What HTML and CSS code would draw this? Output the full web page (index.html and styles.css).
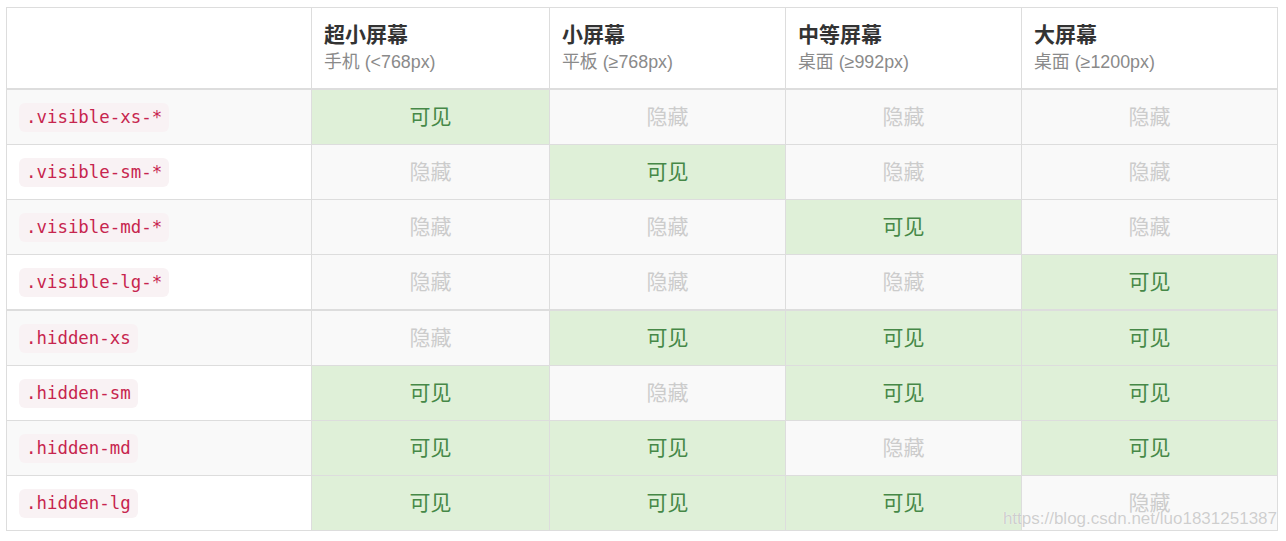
FILE: index.html
```html
<!DOCTYPE html>
<html lang="zh-CN">
<head>
<meta charset="utf-8">
<title>响应式工具</title>
<link rel="stylesheet" href="styles.css">
</head>
<body>
<div class="wrap">
<table class="docs-table">
  <colgroup>
    <col class="c1"><col class="c2"><col class="c3"><col class="c4"><col class="c5">
  </colgroup>
  <thead>
    <tr>
      <th></th>
      <th>超小屏幕<small>手机 (&lt;768px)</small></th>
      <th>小屏幕<small>平板 (≥768px)</small></th>
      <th>中等屏幕<small>桌面 (≥992px)</small></th>
      <th>大屏幕<small>桌面 (≥1200px)</small></th>
    </tr>
  </thead>
  <tbody>
    <tr>
      <th><code>.visible-xs-*</code></th>
      <td class="is-visible">可见</td>
      <td class="is-hidden">隐藏</td>
      <td class="is-hidden">隐藏</td>
      <td class="is-hidden">隐藏</td>
    </tr>
    <tr>
      <th><code>.visible-sm-*</code></th>
      <td class="is-hidden">隐藏</td>
      <td class="is-visible">可见</td>
      <td class="is-hidden">隐藏</td>
      <td class="is-hidden">隐藏</td>
    </tr>
    <tr>
      <th><code>.visible-md-*</code></th>
      <td class="is-hidden">隐藏</td>
      <td class="is-hidden">隐藏</td>
      <td class="is-visible">可见</td>
      <td class="is-hidden">隐藏</td>
    </tr>
    <tr>
      <th><code>.visible-lg-*</code></th>
      <td class="is-hidden">隐藏</td>
      <td class="is-hidden">隐藏</td>
      <td class="is-hidden">隐藏</td>
      <td class="is-visible">可见</td>
    </tr>
  </tbody>
  <tbody>
    <tr>
      <th><code>.hidden-xs</code></th>
      <td class="is-hidden">隐藏</td>
      <td class="is-visible">可见</td>
      <td class="is-visible">可见</td>
      <td class="is-visible">可见</td>
    </tr>
    <tr>
      <th><code>.hidden-sm</code></th>
      <td class="is-visible">可见</td>
      <td class="is-hidden">隐藏</td>
      <td class="is-visible">可见</td>
      <td class="is-visible">可见</td>
    </tr>
    <tr>
      <th><code>.hidden-md</code></th>
      <td class="is-visible">可见</td>
      <td class="is-visible">可见</td>
      <td class="is-hidden">隐藏</td>
      <td class="is-visible">可见</td>
    </tr>
    <tr>
      <th><code>.hidden-lg</code></th>
      <td class="is-visible">可见</td>
      <td class="is-visible">可见</td>
      <td class="is-visible">可见</td>
      <td class="is-hidden">隐藏</td>
    </tr>
  </tbody>
</table>
<span class="watermark">https://blog.csdn.net/luo1831251387</span>
</div>
</body>
</html>
```

FILE: styles.css
```css
html, body {
  margin: 0;
  padding: 0;
  background: #fff;
}
body {
  font-family: "Liberation Sans", "Noto Sans CJK SC", sans-serif;
  font-size: 21px;
  line-height: 30px;
  color: #333;
}
.wrap {
  position: relative;
  padding: 7px 0 0 6px;
  width: 1271px;
}
.docs-table {
  border-collapse: collapse;
  border-spacing: 0;
  table-layout: fixed;
  width: 1271px;
  border: 1px solid #ddd;
}
.c1 { width: 305px; }
.c2 { width: 238px; }
.c3 { width: 236px; }
.c4 { width: 236px; }
.c5 { width: 256px; }
.docs-table th,
.docs-table td {
  border: 1px solid #ddd;
  padding: 12px;
  line-height: 30px;
  height: 30px;
}
.docs-table thead th {
  text-align: left;
  vertical-align: bottom;
  font-weight: bold;
  border-bottom: 2px solid #ddd;
  color: #333;
  height: auto;
}
.docs-table thead small {
  display: block;
  font-weight: normal;
  font-size: 17.85px;
  line-height: 25.5px;
  color: #8a8a8a;
}
.docs-table tbody + tbody {
  border-top: 2px solid #ddd;
}
.docs-table tbody th {
  text-align: left;
  font-weight: normal;
  background: #fff;
  vertical-align: middle;
}
.docs-table tbody tr:nth-child(odd) th {
  background: #f9f9f9;
}
.docs-table td {
  text-align: center;
  vertical-align: middle;
}
.is-visible {
  color: #468847;
  background: #dff0d8;
}
.is-hidden {
  color: #ccc;
  background: #f9f9f9;
}
code {
  font-family: "DejaVu Sans Mono", "Liberation Mono", monospace;
  font-size: 17.4px;
  line-height: 23px;
  padding: 3px 7px;
  margin-top: 1px;
  color: #c7254e;
  background: #f9f2f4;
  border-radius: 6px;
  display: inline-block;
  vertical-align: top;
}
.watermark {
  position: absolute;
  right: 0;
  bottom: 2px;
  font-family: "Liberation Sans", sans-serif;
  font-size: 17px;
  line-height: 20px;
  color: rgba(190, 190, 190, 0.75);
  text-shadow: 0 0 1px #fff;
  white-space: nowrap;
}
```
